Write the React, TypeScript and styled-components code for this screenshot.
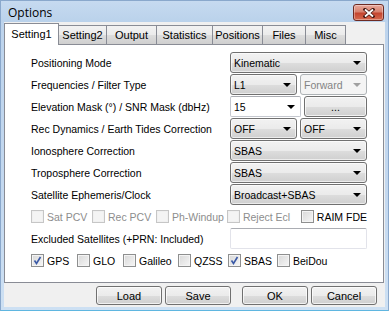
import React from 'react';
import styled, { createGlobalStyle, css } from 'styled-components';

const GlobalStyle = createGlobalStyle`
  html, body {
    margin: 0;
    padding: 0;
  }
  body {
    width: 389px;
    height: 311px;
    overflow: hidden;
    font-family: "Liberation Sans", Arial, sans-serif;
    font-size: 10.5px;
    color: #000;
  }
`;

const Window = styled.div`
  width: 389px;
  height: 311px;
  box-sizing: border-box;
  display: flex;
  flex-direction: column;
  background: linear-gradient(#bcd3ec, #c3d8ef 60%, #cde0f3);
  border: 1px solid #8aa8cc;
  border-bottom-color: #5fb6e0;
`;

const TitleBar = styled.div`
  height: 21px;
  display: flex;
  align-items: center;
  justify-content: space-between;
  padding: 0 4px 0 7px;
  background: linear-gradient(#c6daf0, #bad2eb);
`;

const Title = styled.span`
  font-family: "Open Sans", "DejaVu Sans", sans-serif;
  font-size: 12px;
  color: #000;
  margin-top: 2px;
`;

const CloseButton = styled.div`
  width: 31px;
  height: 17px;
  margin-top: 2px;
  border: 1px solid #6d2a22;
  border-radius: 3px;
  box-sizing: border-box;
  background: linear-gradient(#e8a89c, #d7826f 45%, #c4452f 55%, #d56a4f);
  display: flex;
  align-items: center;
  justify-content: center;
  box-shadow: inset 0 0 0 1px rgba(255, 255, 255, 0.35);
`;

const Client = styled.div`
  flex: 1;
  display: flex;
  flex-direction: column;
  margin: 0 3px 3px 3px;
  background: #f0f0f0;
  padding-top: 1px;
`;

const TabStrip = styled.div`
  display: flex;
  align-items: flex-end;
  height: 21px;
  position: relative;
  z-index: 1;
`;

const Tab = styled.div<{ $w: number; $active?: boolean }>`
  width: ${(p) => p.$w}px;
  box-sizing: border-box;
  display: flex;
  align-items: center;
  justify-content: center;
  border: 1px solid #898c95;
  border-left-width: 0;
  border-bottom: none;
  font-size: 11px;
  ${(p) =>
    p.$active
      ? css`
          height: 22px;
          margin-bottom: -1px;
          border-left-width: 1px;
          background: #fff;
          padding-bottom: 2px;
        `
      : css`
          height: 19px;
          background: linear-gradient(#f2f2f2, #ebebeb 50%, #dddddd 51%, #cfcfcf);
        `}
`;

const Panel = styled.div`
  height: 239px;
  box-sizing: border-box;
  background: #fff;
  border: 1px solid #898c95;
  margin-right: 1px;
  padding: 7px 16px 0 26px;
  display: flex;
  flex-direction: column;
  gap: 1px;
`;

const FormRow = styled.div`
  height: 21px;
  display: flex;
  align-items: center;
  justify-content: space-between;
`;

const Label = styled.span`
  white-space: nowrap;
`;

const Controls = styled.div`
  width: 137px;
  height: 21px;
  display: flex;
  gap: 3px;
`;

const Combo = styled.div<{ $disabled?: boolean; $edit?: boolean }>`
  flex: 1;
  box-sizing: border-box;
  height: 21px;
  display: flex;
  align-items: center;
  justify-content: space-between;
  padding: 0 5px 0 3px;
  border: 1px solid #707070;
  border-radius: 3px;
  background: linear-gradient(#f2f2f2, #ebebeb 50%, #dddddd 51%, #cfcfcf);
  box-shadow: inset 0 0 0 1px rgba(255, 255, 255, 0.6);
  ${(p) =>
    p.$edit &&
    css`
      border-color: #c5c8cf;
      border-top-color: #abadb3;
      border-radius: 2px;
      background: #fff;
      box-shadow: none;
    `}
  ${(p) =>
    p.$disabled &&
    css`
      border-color: #adb2b5;
      background: #f4f4f4;
      color: #838383;
      box-shadow: none;
    `}
`;

const Arrow = styled.span<{ $disabled?: boolean }>`
  width: 0;
  height: 0;
  border-left: 4px solid transparent;
  border-right: 4px solid transparent;
  border-top: 4px solid ${(p) => (p.$disabled ? '#a0a0a0' : '#000')};
`;

const PushButton = styled.div`
  flex: 1;
  box-sizing: border-box;
  height: 21px;
  display: flex;
  align-items: center;
  justify-content: center;
  border: 1px solid #707070;
  border-radius: 3px;
  background: linear-gradient(#f2f2f2, #ebebeb 50%, #dddddd 51%, #cfcfcf);
  box-shadow: inset 0 0 0 1px rgba(255, 255, 255, 0.7);
`;

const TextBox = styled.div`
  width: 137px;
  height: 21px;
  box-sizing: border-box;
  border: 1px solid #e2e3ea;
  border-top-color: #abadb3;
  border-radius: 2px;
  background: #fff;
`;

const CheckRow = styled.div`
  height: 21px;
  display: flex;
  align-items: center;
`;

const Check = styled.label<{ $w?: number; $disabled?: boolean }>`
  ${(p) => p.$w && `width: ${p.$w}px;`}
  display: flex;
  align-items: center;
  gap: 3px;
  white-space: nowrap;
  color: ${(p) => (p.$disabled ? '#8d8d8d' : '#000')};
`;

const Box = styled.span<{ $disabled?: boolean }>`
  width: 13px;
  height: 13px;
  box-sizing: border-box;
  display: flex;
  align-items: center;
  justify-content: center;
  border: 1px solid ${(p) => (p.$disabled ? '#c6c6c6' : '#8e8f8f')};
  background: ${(p) =>
    p.$disabled
      ? '#f4f4f4'
      : 'linear-gradient(135deg, #d8d8d8, #f6f6f6)'};
  box-shadow: inset 0 0 0 1px ${(p) => (p.$disabled ? '#f0f0f0' : '#f4f4f4')};
`;

const Footer = styled.div`
  flex: 1;
  display: flex;
  align-items: center;
  padding-left: 92px;
  padding-top: 1px;
`;

const FooterButton = styled(PushButton)<{ $gap?: number }>`
  flex: none;
  width: 66px;
  height: 19px;
  margin-right: ${(p) => p.$gap ?? 3}px;
  font-size: 11px;
`;

const CheckBox = ({
  label,
  w,
  checked,
  disabled,
}: {
  label: string;
  w?: number;
  checked?: boolean;
  disabled?: boolean;
}) => (
  <Check $w={w} $disabled={disabled}>
    <Box $disabled={disabled}>
      {checked && (
        <svg width="9" height="9" viewBox="0 0 9 9">
          <path d="M1.5 4.5 L3.5 7.5 L7.5 1" fill="none" stroke="#3a59a6" strokeWidth="1.6" />
        </svg>
      )}
    </Box>
    {label}
  </Check>
);

const Select = ({ value, disabled }: { value: string; disabled?: boolean }) => (
  <Combo $disabled={disabled}>
    {value}
    <Arrow $disabled={disabled} />
  </Combo>
);

const tabs = [
  { name: 'Setting1', w: 55 },
  { name: 'Setting2', w: 48 },
  { name: 'Output', w: 50 },
  { name: 'Statistics', w: 56 },
  { name: 'Positions', w: 50 },
  { name: 'Files', w: 43 },
  { name: 'Misc', w: 40 },
];

export default function App() {
  return (
    <>
      <GlobalStyle />
      <Window>
        <TitleBar>
          <Title>Options</Title>
          <CloseButton>
            <svg width="12" height="10" viewBox="0 0 12 10">
              <path
                d="M2 1.5 L10 8.5 M10 1.5 L2 8.5"
                stroke="#4a1a14"
                strokeWidth="3.4"
                strokeLinecap="square"
              />
              <path d="M2 1.5 L10 8.5 M10 1.5 L2 8.5" stroke="#fff" strokeWidth="1.8" />
            </svg>
          </CloseButton>
        </TitleBar>
        <Client>
          <TabStrip>
            {tabs.map((t, i) => (
              <Tab key={t.name} $w={t.w} $active={i === 0}>
                {t.name}
              </Tab>
            ))}
          </TabStrip>
          <Panel>
            <FormRow>
              <Label>Positioning Mode</Label>
              <Controls>
                <Select value="Kinematic" />
              </Controls>
            </FormRow>
            <FormRow>
              <Label>Frequencies / Filter Type</Label>
              <Controls>
                <Select value="L1" />
                <Select value="Forward" disabled />
              </Controls>
            </FormRow>
            <FormRow>
              <Label>Elevation Mask (°) / SNR Mask (dbHz)</Label>
              <Controls>
                <Combo $edit>
                  15
                  <Arrow />
                </Combo>
                <PushButton>...</PushButton>
              </Controls>
            </FormRow>
            <FormRow>
              <Label>Rec Dynamics / Earth Tides Correction</Label>
              <Controls>
                <Select value="OFF" />
                <Select value="OFF" />
              </Controls>
            </FormRow>
            <FormRow>
              <Label>Ionosphere Correction</Label>
              <Controls>
                <Select value="SBAS" />
              </Controls>
            </FormRow>
            <FormRow>
              <Label>Troposphere Correction</Label>
              <Controls>
                <Select value="SBAS" />
              </Controls>
            </FormRow>
            <FormRow>
              <Label>Satellite Ephemeris/Clock</Label>
              <Controls>
                <Select value="Broadcast+SBAS" />
              </Controls>
            </FormRow>
            <CheckRow>
              <CheckBox label="Sat PCV" w={61} disabled />
              <CheckBox label="Rec PCV" w={64} disabled />
              <CheckBox label="Ph-Windup" w={71} disabled />
              <CheckBox label="Reject Ecl" w={74} disabled />
              <CheckBox label="RAIM FDE" />
            </CheckRow>
            <FormRow>
              <Label>Excluded Satellites (+PRN: Included)</Label>
              <TextBox />
            </FormRow>
            <CheckRow>
              <CheckBox label="GPS" w={46} checked />
              <CheckBox label="GLO" w={46} />
              <CheckBox label="Galileo" w={55} />
              <CheckBox label="QZSS" w={50} />
              <CheckBox label="SBAS" w={49} checked />
              <CheckBox label="BeiDou" />
            </CheckRow>
          </Panel>
          <Footer>
            <FooterButton>Load</FooterButton>
            <FooterButton $gap={11}>Save</FooterButton>
            <FooterButton>OK</FooterButton>
            <FooterButton>Cancel</FooterButton>
          </Footer>
        </Client>
      </Window>
    </>
  );
}
